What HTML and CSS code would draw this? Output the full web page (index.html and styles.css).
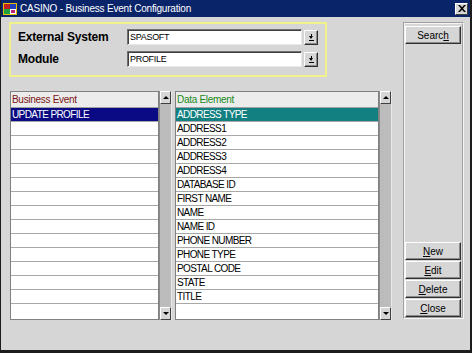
FILE: index.html
```html
<!DOCTYPE html>
<html>
<head>
  <link rel="stylesheet" href="styles.css">
</head>
<body>
  <div class="window">
    <div class="titlebar">
      <svg class="title-icon" width="14" height="14" viewBox="0 0 14 14">
        <rect x="0" y="1" width="14" height="12" fill="#e8c000"/>
        <rect x="1" y="2" width="6" height="5" fill="#c02020"/>
        <rect x="7" y="2" width="6" height="5" fill="#2040c0"/>
        <rect x="1" y="7" width="6" height="5" fill="#20a040"/>
        <rect x="7" y="7" width="6" height="5" fill="#ffffff"/>
        <rect x="8" y="8" width="4" height="3" fill="#c02080"/>
      </svg>
      <span class="title-text">CASINO - Business Event Configuration</span>
      <span class="title-close">
        <svg width="8" height="7" viewBox="0 0 8 7">
          <path d="M0 0h2l2 2.2L6 0h2L5 3.5 8 7H6L4 4.8 2 7H0l3-3.5z" fill="#000"/>
        </svg>
      </span>
    </div>

    <div class="content">
      <div class="main-col">
        <!-- filter box -->
        <div class="filter-box">
          <div class="filter-row">
            <label class="filter-label">External System</label>
            <div class="filter-input">SPASOFT</div>
            <div class="drop-btn"><span class="drop-arrow"></span></div>
          </div>
          <div class="filter-row">
            <label class="filter-label">Module</label>
            <div class="filter-input">PROFILE</div>
            <div class="drop-btn"><span class="drop-arrow"></span></div>
          </div>
        </div>

        <!-- lists -->
        <div class="lists">
          <div class="grid grid-events">
            <div class="grid-head head-red">Business Event</div>
            <div class="grid-row selected-navy">UPDATE PROFILE</div>
            <div class="grid-row"></div>
            <div class="grid-row"></div>
            <div class="grid-row"></div>
            <div class="grid-row"></div>
            <div class="grid-row"></div>
            <div class="grid-row"></div>
            <div class="grid-row"></div>
            <div class="grid-row"></div>
            <div class="grid-row"></div>
            <div class="grid-row"></div>
            <div class="grid-row"></div>
            <div class="grid-row"></div>
            <div class="grid-row"></div>
            <div class="grid-row last"></div>
          </div>
          <div class="scrollbar">
            <div class="scroll-btn"><span class="arrow-up"></span></div>
            <div class="scroll-track"></div>
            <div class="scroll-btn"><span class="arrow-down"></span></div>
          </div>

          <div class="grid grid-elements">
            <div class="grid-head head-green">Data Element</div>
            <div class="grid-row selected-teal">ADDRESS TYPE</div>
            <div class="grid-row">ADDRESS1</div>
            <div class="grid-row">ADDRESS2</div>
            <div class="grid-row">ADDRESS3</div>
            <div class="grid-row">ADDRESS4</div>
            <div class="grid-row">DATABASE ID</div>
            <div class="grid-row">FIRST NAME</div>
            <div class="grid-row">NAME</div>
            <div class="grid-row">NAME ID</div>
            <div class="grid-row">PHONE NUMBER</div>
            <div class="grid-row">PHONE TYPE</div>
            <div class="grid-row">POSTAL CODE</div>
            <div class="grid-row">STATE</div>
            <div class="grid-row">TITLE</div>
            <div class="grid-row last"></div>
          </div>
          <div class="scrollbar">
            <div class="scroll-btn"><span class="arrow-up"></span></div>
            <div class="scroll-track"></div>
            <div class="scroll-btn"><span class="arrow-down"></span></div>
          </div>
        </div>
      </div>

      <!-- button panel -->
      <div class="button-panel">
        <button class="panel-btn">Searc<u>h</u></button>
        <div class="panel-spacer"></div>
        <button class="panel-btn"><u>N</u>ew</button>
        <button class="panel-btn"><u>E</u>dit</button>
        <button class="panel-btn"><u>D</u>elete</button>
        <button class="panel-btn"><u>C</u>lose</button>
      </div>
    </div>
  </div>
</body>
</html>
```

FILE: styles.css
```css
/* Page */
body {
  margin: 0;
  background-color: #000;
  font-family: "Liberation Sans", Arial, sans-serif;
}

/* Window frame */
.window {
  width: 472px;
  height: 353px;
  box-sizing: border-box;
  border-style: solid;
  border-color: #1c1c1c;
  border-width: 0 2px 3px 1px;
  background-color: #d6d6d6;
  display: flex;
  flex-direction: column;
}

/* Title bar */
.titlebar {
  height: 17px;
  flex-shrink: 0;
  background-color: #0a246a;
  display: flex;
  align-items: center;
  padding-left: 2px;
  padding-right: 2px;
}

.title-icon {
  margin-right: 3px;
}

.title-text {
  flex-grow: 1;
  color: #fff;
  font-size: 10px;
  letter-spacing: -0.2px;
}

.title-close {
  width: 13px;
  height: 12px;
  box-sizing: border-box;
  background-color: #d6d6d6;
  border: 1px solid;
  border-color: #fff #404040 #404040 #fff;
  display: flex;
  align-items: center;
  justify-content: center;
}

/* Content area */
.content {
  flex-grow: 1;
  display: flex;
  padding: 5px 6px 0 8px;
}

.main-col {
  display: flex;
  flex-direction: column;
}

/* Filter box */
.filter-box {
  width: 318px;
  height: 55px;
  box-sizing: border-box;
  border: 2px solid #f2f28c;
  padding: 5px 7px 0 7px;
  display: flex;
  flex-direction: column;
  gap: 6px;
}

.filter-row {
  display: flex;
  align-items: center;
  height: 16px;
}

.filter-label {
  width: 109px;
  font-size: 12px;
  font-weight: bold;
  color: #000;
  letter-spacing: -0.2px;
}

.filter-input {
  width: 175px;
  height: 16px;
  box-sizing: border-box;
  background-color: #fff;
  border: 1px solid;
  border-color: #707070 #e8e8e8 #e8e8e8 #707070;
  box-shadow: inset 1px 1px 0 #404040;
  font-size: 9px;
  line-height: 14px;
  padding-left: 2px;
  letter-spacing: -0.3px;
}

.drop-btn {
  width: 14px;
  height: 15px;
  margin-left: 2px;
  box-sizing: border-box;
  background-color: #d6d6d6;
  border: 1px solid;
  border-color: #fff #303030 #303030 #fff;
  box-shadow: inset -1px -1px 0 #888;
  display: flex;
  align-items: center;
  justify-content: center;
}

.drop-arrow {
  width: 5px;
  height: 6px;
  border-bottom: 1px solid #000;
  background:
    linear-gradient(#000, #000) center top / 1px 2px no-repeat;
  position: relative;
}

.drop-arrow::after {
  content: "";
  position: absolute;
  left: 0;
  top: 2px;
  border-left: 2.5px solid transparent;
  border-right: 2.5px solid transparent;
  border-top: 3px solid #000;
}

/* Lists */
.lists {
  display: flex;
  margin-top: 14px;
  margin-left: 1px;
  height: 229px;
}

.grid {
  box-sizing: border-box;
  background-color: #fff;
  border: 1px solid #808080;
  display: flex;
  flex-direction: column;
  font-size: 10px;
  letter-spacing: -0.6px;
}

.grid-events {
  width: 149px;
}

.grid-elements {
  width: 204px;
  margin-left: 3px;
}

.grid-head {
  height: 16px;
  box-sizing: border-box;
  background-color: #ececec;
  border-bottom: 1px solid #a0a0a0;
  line-height: 15px;
  padding-left: 1px;
  letter-spacing: -0.3px;
}

.head-red {
  color: #7a1414;
}

.head-green {
  color: #1a8a1a;
}

.grid-row {
  height: 14px;
  box-sizing: border-box;
  border-bottom: 1px solid #a8a8a8;
  line-height: 13px;
  padding-left: 1px;
  color: #000;
  flex-shrink: 0;
}

.grid-row.last {
  border-bottom: none;
  flex-grow: 1;
}

.selected-navy {
  background-color: #0a0a84;
  color: #fff;
}

.selected-teal {
  background-color: #128080;
  color: #fff;
}

/* Scrollbar */
.scrollbar {
  width: 13px;
  box-sizing: border-box;
  display: flex;
  flex-direction: column;
  background-color: #bcbcbc;
  border-left: 1px solid #8a8a8a;
  border-right: 1px solid #e8e8e8;
}

.scroll-track {
  flex-grow: 1;
}

.scroll-btn {
  height: 13px;
  box-sizing: border-box;
  background-color: #d6d6d6;
  border: 1px solid;
  border-color: #fff #404040 #404040 #fff;
  display: flex;
  align-items: center;
  justify-content: center;
}

.arrow-up {
  border-left: 3px solid transparent;
  border-right: 3px solid transparent;
  border-bottom: 3px solid #000;
}

.arrow-down {
  border-left: 3px solid transparent;
  border-right: 3px solid transparent;
  border-top: 3px solid #000;
}

/* Button panel */
.button-panel {
  width: 61px;
  height: 297px;
  margin-left: 11px;
  box-sizing: border-box;
  border: 2px groove #f4f4f4;
  display: flex;
  flex-direction: column;
  gap: 1px;
  padding: 2px 1px 0 0;
}

.panel-spacer {
  flex-grow: 1;
}

.panel-btn {
  height: 18px;
  flex-shrink: 0;
  box-sizing: border-box;
  background-color: #d6d6d6;
  border: 1px solid;
  border-color: #fff #303030 #303030 #fff;
  box-shadow: inset -1px -1px 0 #8a8a8a;
  font-family: "Liberation Sans", Arial, sans-serif;
  font-size: 10px;
  color: #000;
  padding: 0;
}
```
